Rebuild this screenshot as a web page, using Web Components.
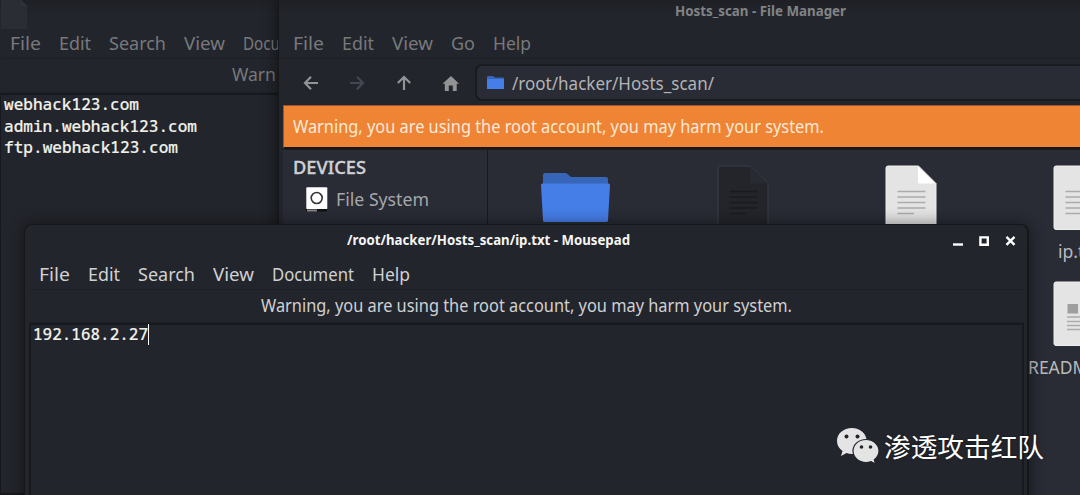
<!DOCTYPE html>
<html lang="en">
<head>
<meta charset="utf-8">
<title>Desktop</title>
<style>
html,body{margin:0;height:100%;overflow:hidden;background:#22242b}
</style>
</head>
<body>
<desk-top></desk-top>
<script>
const define = (name, html, init) => {
  const t = document.createElement('template');
  t.innerHTML = html;
  customElements.define(name, class extends HTMLElement {
    constructor(){ super(); this.attachShadow({mode:'open'}).append(t.content.cloneNode(true)); }
    connectedCallback(){ if(init) init(this, this.shadowRoot); }
  });
};

/* One line of text set to an exact width (w) */
define('fit-text', `<style>
:host{display:block;flex:none;white-space:pre}
span{display:inline-block;transform-origin:0 50%}
</style><span><slot></slot></span>`, (el, root) => {
  const w = +el.getAttribute('w'), s = root.querySelector('span');
  el.style.width = w + 'px';
  const natural = s.getBoundingClientRect().width;
  if(natural) s.style.transform = 'scaleX(' + w / natural + ')';
});

define('menu-bar', `<style>
:host{display:flex;gap:var(--gap,18px);align-items:center;height:30px;box-sizing:border-box;border-bottom:1px solid #1e2026}
</style><slot></slot>`);

define('title-bar', `<style>
:host{display:flex;align-items:center;height:32px;font-weight:700;font-size:14px;box-sizing:border-box}
</style><slot></slot>`);

define('window-buttons', `<style>
:host{display:block;width:64px;height:12px}svg{display:block}
</style><svg width="64" height="12" viewBox="0 0 64 12" fill="none" stroke="#fff">
<path d="M0 9.5H10" stroke-width="2.4"/><path d="M27.4 2.4H34.8V9.8H27.4Z" stroke-width="2.4"/><path d="M53.5 1.9L61.5 9.9M61.5 1.9L53.5 9.9" stroke-width="2.4"/></svg>`);

define('text-editor', `<style>
:host{display:block;flex:1;box-sizing:border-box;border:2px solid #17191e;background:#23252c;color:#f0f0ea;
font:500 16px/21.6px "Noto Sans Mono","DejaVu Sans Mono","Liberation Mono",monospace;-webkit-text-stroke:.15px;white-space:pre;padding:0 0 0 1px}
</style><slot></slot>`);

define('text-line', `<style>
:host{display:flex;height:21.6px;align-items:center}
i{display:none;width:1px;height:21px;background:#fff}
:host([caret]) i{display:block}
</style><slot></slot><i></i>`);

define('mousepad-back', `<style>
:host{display:flex;flex-direction:column;width:279px;height:495px;overflow:hidden;background:linear-gradient(#1e2026,#23252c 14px);color:#77797c}
.top{height:29px;flex:none}
.top svg{display:block}
menu-bar{margin:0 1px;padding:0 0 1px 9px;--gap:18px}
.warn{height:34px;flex:none;display:flex;align-items:center;padding:0 0 3px 232px;box-sizing:border-box;border-bottom:1px solid #1f2127}
text-editor{margin-right:-4px;border-left-width:1px;padding-left:2.500px}
text-line{margin-top:-1px;margin-bottom:1px}
</style>
<div class="top"><svg width="30" height="30"><path d="M1 0H21L27 6V29H1Z" fill="#2b2d35"/><path d="M21 0V6H27Z" fill="#30323a"/></svg></div>
<menu-bar><fit-text w="31">File</fit-text><fit-text w="32">Edit</fit-text><fit-text w="57">Search</fit-text><fit-text w="41">View</fit-text><fit-text w="37">Docu</fit-text></menu-bar>
<div class="warn"><fit-text w="44">Warn</fit-text></div>
<text-editor><text-line><fit-text w="135">webhack123.com</fit-text></text-line><text-line><fit-text w="193">admin.webhack123.com</fit-text></text-line><text-line><fit-text w="174">ftp.webhack123.com</fit-text></text-line></text-editor>`);

define('path-bar', `<style>
:host{display:flex;flex:1;height:37px;box-sizing:border-box;border:2px solid #191b20;border-right:0;border-radius:7px 0 0 7px;background:#292b35;align-items:center;padding-left:10px;gap:7px;color:#b2b4b7}
svg{display:block}
</style><svg width="18" height="14"><path d="M0 1Q0 0 1 0H6L8 1.5H16Q17 1.5 17 2.5V13H0Z" fill="#3766b9"/><path d="M0 3H17V13H0Z" fill="#467ee8"/></svg><slot></slot>`);

define('tool-bar', `<style>
:host{display:flex;height:46px;align-items:center;padding-left:24px;box-sizing:border-box;flex:none}
svg{display:block;flex:none;width:160px;height:20px;margin:1px 12px 0 0}
path-bar{margin-top:1px}
</style><svg viewBox="0 0 160 20" fill="none" stroke="#929395" stroke-width="2.200">
<path d="M15 10H2M8 3.8L2 10L8 16.2"/><path d="M47 10H60M54 3.8L60 10L54 16.2" stroke="#444754"/>
<path d="M101 17V4M94.8 10L101 4L107.2 10"/><path d="M139.5 10.7L148 3L156 10.7H153.7V18H149.8V12.5H145.8V18H141.8V10.7Z" fill="#929395" stroke="none"/></svg>
<path-bar><fit-text w="202">/root/hacker/Hosts_scan/</fit-text></path-bar>`);

define('folder-icon', `<style>:host{display:block}svg{display:block}</style>
<svg width="70" height="52"><path d="M2 3Q2 1 4 1H24Q26 1 27 2.5L30 5H65Q67 5 67 7V20H2Z" fill="#3766b9"/><path d="M0 13Q0 11.500 1.5 11.500H67.5Q69 11.500 69 13L67 48.5Q67 50 65 50H4Q2 50 2 48.5Z" fill="#467ee8"/></svg>`);

define('doc-icon', `<style>
:host{display:block;width:52px;height:66px;--page:#e4e4e4;--fold:#fff;--line:#ababab;--edge:#eee}
:host([dark]){--page:#23252b;--fold:#282a31;--line:#191b20;--edge:#3d3f46}
svg{display:block}.pic{display:none}:host([picture]) .pic{display:block}:host([picture]) .txt{display:none}
</style><svg width="52" height="66"><path d="M3 1H33.5L51 18.5V62.500Q51 64.500 49 64.500H3Q1 64.500 1 62.500V3Q1 1 3 1Z" fill="var(--page)" stroke="var(--edge)"/>
<path d="M33 1.500L50.500 18.500H33Z" fill="var(--fold)"/>
<g stroke="var(--line)" stroke-width="1.7"><path class="txt" d="M12.500 26.500H40.500M12.500 32H40.500M12.500 37.500H40.500M12.500 43H40.500M12.500 48.500H29"/><g class="pic"><path d="M14.500 23H25V32.500H14.500Z" fill="#9e9e9e" stroke="none"/><path d="M14 36H40M14 40.500H40M14 44.500H40M14 48.500H40"/></g></g></svg>`);

define('drive-icon', `<style>:host{display:block}svg{display:block}</style>
<svg width="22" height="26"><rect x=".3" y=".3" width="21" height="22" rx="1" fill="#fff"/><circle cx="10.700" cy="11" r="5.500" fill="none" stroke="#33353a" stroke-width="1.600"/><path d="M0 22H21V24.500H0Z" fill="#111"/><path d="M1 23.500H11" stroke="#888" stroke-width="2"/></svg>`);

define('file-manager', `<style>
:host{display:flex;flex-direction:column;width:805px;height:495px;box-sizing:border-box;border-left:1px solid #15171b;background:linear-gradient(#1e2026,#23252c 14px);color:#77797c;box-shadow:-3px 0 12px #0006}
title-bar{height:29px;padding:0 0 7px 396px;color:#818385;flex:none}
menu-bar{padding:0 0 1px 14px;flex:none}
.warn{height:44px;box-sizing:border-box;margin-left:4px;border:1px solid #9b5727;border-bottom:2px solid #15171b;background:#ee8434;color:#fbe9d8;display:flex;align-items:center;padding:0 0 2px 9px;flex:none}
.body{display:grid;grid-template-columns:205px 1fr;flex:1;margin-left:4px;background:#292b35;border-top:1px solid #1c1e24}
aside{border-right:1px solid #17191e;padding:5px 0 0 10px;color:#a5a7aa}
.head{font-weight:500;color:#d0d1d3;height:24px;line-height:24px;-webkit-text-stroke:.35px}
.row{display:flex;gap:9px;align-items:center;padding-left:13px;height:41px}
.row fit-text{margin:-2px 0 0 -1px}
main{display:grid;grid-template-columns:repeat(4,168px);grid-auto-rows:116px;padding:15px 0 0 3px;color:#b8babd}
.item{display:grid;justify-items:center;grid-template-rows:66px 40px;align-items:center;padding-bottom:10px}
folder-icon{margin:0 0 0 2px}
</style>
<title-bar><fit-text w="171">Hosts_scan - File Manager</fit-text></title-bar>
<menu-bar><fit-text w="31">File</fit-text><fit-text w="32">Edit</fit-text><fit-text w="41">View</fit-text><fit-text w="24">Go</fit-text><fit-text w="38">Help</fit-text></menu-bar>
<tool-bar></tool-bar>
<div class="warn"><fit-text w="531">Warning, you are using the root account, you may harm your system.</fit-text></div>
<div class="body"><aside><fit-text class="head" w="73">DEVICES</fit-text><div class="row"><drive-icon></drive-icon><fit-text w="93">File System</fit-text></div></aside>
<main><div class="item"><folder-icon></folder-icon></div><div class="item"><doc-icon dark></doc-icon></div><div class="item"><doc-icon></doc-icon></div><div class="item"><doc-icon></doc-icon><fit-text w="42">ip.txt</fit-text></div>
<div class="item"></div><div class="item"></div><div class="item"></div><div class="item"><doc-icon picture></doc-icon><fit-text w="102">README.md</fit-text></div></main></div>`);

define('mousepad-window', `<style>
:host{display:flex;flex-direction:column;width:1005px;height:290px;box-sizing:border-box;border:1px solid #15171b;border-width:1px 2px 0 1px;border-radius:8px 8px 0 0;background:#23252c;color:#d0d1d3;padding:0 3px 0 4px;box-shadow:0 0 16px #0007}
title-bar{color:#f5f5f5;padding:0 0 1px 318px}
title-bar fit-text{margin-top:-1px}
window-buttons{margin:0 0 0 auto;padding-right:7px}
menu-bar{padding:1px 0 0 10px;height:33px;flex:none}
.warn{height:32px;box-sizing:content-box;display:flex;padding-left:232px;align-items:center;border-bottom:1px solid #1e2026;flex:none}
.warn fit-text{margin-top:-3px}
text-editor{padding-left:2px}
text-editor text-line{margin-top:-1px}
</style>
<title-bar><fit-text w="283">/root/hacker/Hosts_scan/ip.txt - Mousepad</fit-text><window-buttons></window-buttons></title-bar>
<menu-bar><fit-text w="31">File</fit-text><fit-text w="32">Edit</fit-text><fit-text w="57">Search</fit-text><fit-text w="41">View</fit-text><fit-text w="82">Document</fit-text><fit-text w="38">Help</fit-text></menu-bar>
<div class="warn"><fit-text w="531">Warning, you are using the root account, you may harm your system.</fit-text></div>
<text-editor><text-line caret><fit-text w="115">192.168.2.27</fit-text></text-line></text-editor>`);

define('water-mark', `<style>
:host{display:flex;align-items:center;gap:4px;font:400 26.700px/38px "Noto Sans CJK SC",sans-serif;color:#fff;text-shadow:0 0 2px #0009}
svg{display:block;flex:none}
</style><svg width="43" height="38" viewBox="0 0 43 38"><path d="M15 1C6.500 1 0 6.500 0 14C0 18.500 2.200 21.700 5.500 24L4 29L9.500 26Q12 27 15 27Q23 27 27 22Q30 18 29.500 12C28 5 22 1 15 1Z" fill="#e4e4e4"/><path d="M29 12.500C21.500 12.500 16 17.800 16 24C16 30.500 22 35.500 29 35.500Q31.500 35.500 34 34.600L38.500 37L37.300 32.700Q42 29 42 24C42 17.500 36 12.500 29 12.500Z" fill="#e4e4e4" stroke="#23252c" stroke-width="1.200"/><g fill="#23252c"><circle cx="9.500" cy="9.500" r="2"/><circle cx="20.500" cy="9.500" r="2"/><circle cx="24.500" cy="20" r="1.800"/><circle cx="33.500" cy="20" r="1.800"/></g></svg><fit-text w="160">渗透攻击红队</fit-text>`);

define('desk-top', `<style>
:host{display:block;position:relative;width:1080px;height:495px;overflow:hidden;font:400 17.600px/24px "Noto Sans",sans-serif}
mousepad-back,file-manager,mousepad-window,water-mark{position:absolute}
mousepad-back{left:0;top:0}file-manager{left:278px;top:0}mousepad-window{left:24px;top:224px}water-mark{left:837px;top:427px}
</style><mousepad-back></mousepad-back><file-manager></file-manager><mousepad-window></mousepad-window><water-mark></water-mark>`);
</script>
</body>
</html>
